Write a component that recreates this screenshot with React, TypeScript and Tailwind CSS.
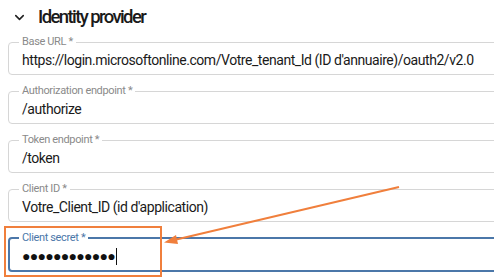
import { ChevronDown } from "lucide-react";

const fields = [
  { label: "Base URL", value: "https://login.microsoftonline.com/Votre_tenant_Id (ID d'annuaire)/oauth2/v2.0" },
  { label: "Authorization endpoint", value: "/authorize" },
  { label: "Token endpoint", value: "/token" },
  { label: "Client ID", value: "Votre_Client_ID (id d'application)" },
];

function Field({ label, value }: { label: string; value: string }) {
  return (
    <fieldset className="relative h-[39px] w-[560px] rounded-[4px] border border-[#d6d6d6] px-[13px] pt-0">
      <legend className="ml-[-3px] px-[3px] text-[11px] leading-[12px] tracking-[-0.35px] text-[#8a8a8a]">{label} *</legend>
      <div className="mt-[3px] whitespace-nowrap text-[14px] leading-[18px] tracking-[-0.45px] text-[#1a1a1a]">{value}</div>
    </fieldset>
  );
}

export default function App() {
  return (
    <div className="relative h-[280px] w-[494px] overflow-hidden bg-white font-['Roboto',sans-serif]">
      <div className="flex items-center pl-[12px] pt-[4px]">
        <ChevronDown className="h-[15px] w-[15px] text-[#222]" strokeWidth={2.5} />
        <h1 className="ml-[11px] text-[18.5px] font-medium leading-[26px] tracking-[-1.6px] text-[#1a1a1a]">Identity provider</h1>
      </div>
      <div className="ml-[8px] mt-[6px] flex flex-col gap-[10px]">
        {fields.map((f) => (
          <Field key={f.label} label={f.label} value={f.value} />
        ))}
        <fieldset className="relative h-[40px] w-[560px] rounded-[4px] border-2 border-[#4b77a9] px-[12px] pt-0">
          <legend className="ml-[-3px] px-[3px] text-[11px] leading-[12px] tracking-[-0.35px] text-[#4b77a9]">Client secret *</legend>
          <div className="mt-[3px] flex items-center whitespace-nowrap text-[14px] leading-[18px] text-[#111]">
            <span className="tracking-[-0.7px]">●●●●●●●●●●●●</span>
            <span className="ml-[1px] inline-block h-[17px] w-[1px] bg-[#111]" />
          </div>
        </fieldset>
      </div>
      {/* annotation */}
      <div className="absolute left-[4px] top-[226px] h-[51px] w-[158px] border-2 border-[#f07f3c]" />
      <svg className="absolute left-0 top-0" width="494" height="280" viewBox="0 0 494 280">
        <line x1="399" y1="187" x2="170" y2="241" stroke="#f07f3c" strokeWidth="2" />
        <polygon points="164,242.5 176,235 178,244" fill="#f07f3c" />
      </svg>
    </div>
  );
}
